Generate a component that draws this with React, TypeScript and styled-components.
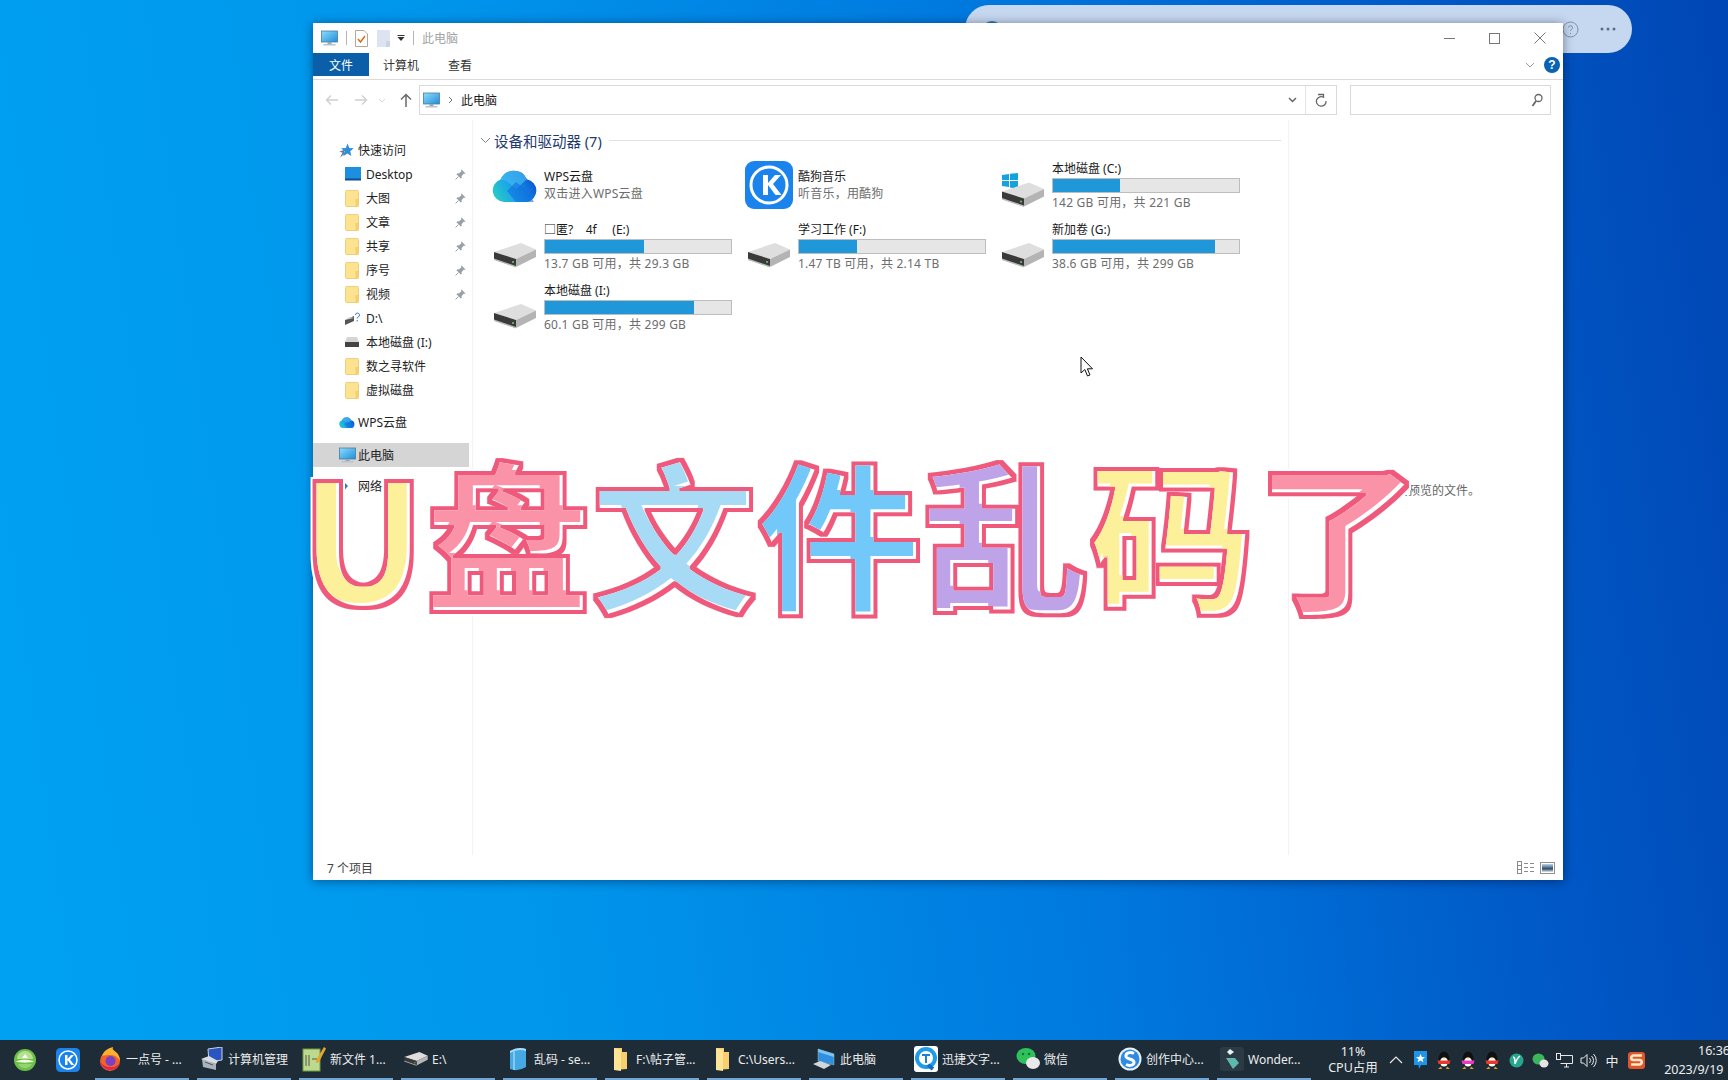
import React from "react";
import styled, { createGlobalStyle } from "styled-components";

const Global = createGlobalStyle`
  html, body { margin: 0; padding: 0; width: 1728px; height: 1080px; overflow: hidden; }
  body { font-family: "Noto Sans", "Noto Sans CJK SC", sans-serif; font-size: 12px; }
  * { box-sizing: border-box; }
`;

const Screen = styled.div`
  width: 1728px; height: 1080px; display: flex; flex-direction: column; overflow: hidden;
`;
const Desktop = styled.div`
  position: relative; flex: 1;
  background: linear-gradient(82deg, #00a1f3 0%, #0096ec 30%, #0078de 60%, #0058c6 84%, #0046b4 100%);
`;
const BackPill = styled.div`
  position: absolute; left: 965px; top: 5px; width: 667px; height: 48px; border-radius: 24px;
  background: #c6d8f0; display: flex; align-items: center; justify-content: flex-end; gap: 21px; padding-right: 16px;
`;
const PillBadge = styled.i`
  position: absolute; left: 17px; top: 16px; width: 20px; height: 20px; border-radius: 50%; background: #2c78c0;
`;
const Win = styled.div`
  position: absolute; left: 313px; top: 23px; width: 1250px; height: 857px; background: #fff;
  display: flex; flex-direction: column; box-shadow: 0 1px 10px rgba(0, 0, 30, .45);
`;
const TitleBar = styled.div`
  height: 30px; display: flex; align-items: center; padding-left: 8px; color: #a3a3a3; flex: none;
`;
const TitleSep = styled.i`
  width: 1px; height: 14px; background: #b5b5b5; margin: 0 8px;
`;
const QuickIcon = styled.span`
  display: flex; margin-right: ${p => p.$mr || 0}px;
`;
const WinControls = styled.div`
  margin-left: auto; display: flex; align-items: center; gap: 34px; padding-right: 17px;
`;
const TabRow = styled.div`
  height: 27px; flex: none; display: flex; align-items: flex-start; border-bottom: 1px solid #dadada; position: relative;
`;
const FileTab = styled.div`
  width: 56px; height: 23px; background: #0b5fa9; color: #fff; display: flex; align-items: center; justify-content: center;
`;
const Tab = styled.div`
  height: 23px; display: flex; align-items: center; color: #333; margin-left: ${p => p.$ml}px;
`;
const RibbonRight = styled.div`
  margin-left: auto; display: flex; align-items: center; height: 23px; gap: 9px; padding-right: 3px;
`;
const HelpDot = styled.div`
  width: 16px; height: 16px; border-radius: 50%; background: #0b62b0; color: #fff; font: bold 12px "Liberation Sans", sans-serif;
  display: flex; align-items: center; justify-content: center;
`;
const Toolbar = styled.div`
  height: 40px; flex: none; display: flex; align-items: center; padding: 0 12px 0 12px;
`;
const NavArrows = styled.div`
  width: 94px; display: flex; align-items: center; flex: none;
`;
const AddressBox = styled.div`
  flex: 1; height: 30px; border: 1px solid #d9d9d9; display: flex; align-items: center; padding-left: 3px; color: #1a1a1a;
`;
const Crumb = styled.span`
  margin-left: ${p => p.$ml}px; display: flex;
`;
const AddrEnd = styled.div`
  margin-left: auto; display: flex; align-items: center; height: 100%;
`;
const RefreshBox = styled.div`
  width: 31px; height: 100%; border-left: 1px solid #e3e3e3; display: flex; align-items: center; justify-content: center; margin-left: 8px;
`;
const SearchBox = styled.div`
  width: 201px; height: 30px; margin-left: 13px; border: 1px solid #d9d9d9; display: flex; align-items: center; justify-content: flex-end; padding-right: 7px; flex: none;
`;
const Body = styled.div`
  flex: 1; display: flex; min-height: 0;
`;
const Nav = styled.div`
  width: 160px; flex: none; padding-top: 18px; border-right: 1px solid #f3f3f3;
`;
const NavRow = styled.div`
  width: 156px; height: 24px; display: flex; align-items: center; color: #222;
  padding-left: ${p => (p.$sub ? 32 : 26)}px; padding-right: 3px;
  margin-top: ${p => p.$mt || 0}px;
  background: ${p => (p.$on ? "#d5d5d5" : "transparent")};
`;
const NavIcon = styled.span`
  width: ${p => (p.$sub ? 21 : 19)}px; flex: none; display: flex; align-items: center;
`;
const PinWrap = styled.span`
  margin-left: auto; display: flex;
`;
const Content = styled.div`
  flex: 1; padding-top: 10px; min-width: 0;
`;
const GroupHead = styled.div`
  height: 20px; display: flex; align-items: center; padding: 0 7px; font-size: 14.5px; color: #1e3a6e;
`;
const GroupChevron = styled.svg`
  margin-right: 3px;
`;
const GroupLine = styled.i`
  flex: 1; height: 1px; background: #e3e3e3; margin-left: 7px;
`;
const TileGrid = styled.div`
  display: grid; grid-template-columns: repeat(3, 254px); grid-auto-rows: 61px; margin-top: 4px; padding-left: 17px;
`;
const Tile = styled.div`
  display: flex; align-items: center;
`;
const TileIcon = styled.div`
  width: 54px; padding-right: 4px; padding-top: ${p => p.$pt || 0}px; flex: none; display: flex; justify-content: center;
`;
const TileText = styled.div`
  width: 188px; display: flex; flex-direction: column;
`;
const TileName = styled.div`
  height: 17px; line-height: ${p => (p.$drive ? 19 : 17)}px; color: #1a1a1a; white-space: pre;
`;
const TileSub = styled.div`
  height: 17px; line-height: 17px; color: #6d6d6d; white-space: pre; letter-spacing: .22px;
`;
const Bar = styled.div`
  height: 15px; margin: 2px 0 1px; border: 1px solid #bdbdbd; background: #e6e6e6;
`;
const BarFill = styled.div`
  height: 100%; background: #1f97d8;
`;
const Details = styled.div`
  width: 275px; flex: none; border-left: 1px solid #f3f3f3; display: flex; justify-content: center; padding-top: 361px; color: #666;
`;
const Status = styled.div`
  height: 25px; flex: none; display: flex; align-items: center; padding: 0 8px 0 14px; color: #444;
`;
const StatusIcons = styled.div`
  margin-left: auto; display: flex; align-items: center; gap: 6px;
`;
const Overlay = styled.div`
  position: absolute; left: 301px; top: 446px; display: flex; height: 170px;
`;
const Glyph = styled.span`
  width: ${p => p.$w}px; height: 170px; display: flex; justify-content: center;
  font: 700 ${p => p.$fs || 162}px/170px "Noto Sans CJK SC", sans-serif;
  color: ${p => p.$c}; filter: url(#sticker); transform: translateY(${p => p.$dy || 0}px) scaleX(${p => p.$sx || 1});
`;
const Cursor = styled.svg`
  position: absolute; left: 1080px; top: 356px;
`;
const Taskbar = styled.div`
  height: 40px; flex: none; background: #1e2c38; display: flex; align-items: center; padding-left: 13px; color: #ececec; position: relative;
`;
const TaskLead = styled.span`
  display: flex; margin-right: ${p => p.$mr}px;
`;
const TaskItems = styled.div`
  display: flex; gap: 8px; height: 100%;
`;
const TaskItem = styled.div`
  width: 94px; height: 100%; display: flex; align-items: center; gap: 4px; padding-left: 3px;
  border-bottom: 2px solid #6fa6d4; white-space: nowrap; overflow: hidden;
`;
const TaskIcon = styled.span`
  width: 24px; flex: none; display: flex; justify-content: center; align-items: center;
`;
const Cpu = styled.div`
  width: 62px; margin-left: 11px; flex: none; text-align: center; line-height: 16px; font-size: 12.5px;
`;
const Tray = styled.div`
  display: flex; align-items: center;
`;
const TrayCell = styled.span`
  width: 24px; display: flex; justify-content: center; align-items: center; font-size: 13px;
`;
const Clock = styled.div`
  margin-left: auto; margin-right: -2px; text-align: right; line-height: 19px; white-space: pre; font-size: 12.5px;
`;

const Monitor = ({ s = 17 }: { s?: number }) => (
  <svg width={s} height={s} viewBox="0 0 17 17">
    <defs><linearGradient id="scr" x1="0" y1="0" x2="1" y2="1"><stop offset="0" stopColor="#8fdcfb" /><stop offset="1" stopColor="#1d8fdc" /></linearGradient></defs>
    <rect x=".5" y="1" width="16" height="11" fill="url(#scr)" stroke="#4b7c9e" strokeWidth=".8" />
    <rect x="6.5" y="12" width="4" height="2" fill="#9aa8b2" />
    <rect x="2.5" y="14" width="12" height="1.5" fill="#b9c3cb" />
  </svg>
);
const Folder = () => (
  <svg width="15" height="17" viewBox="0 0 15 17">
    <rect x=".5" y=".5" width="13" height="16" rx="1" fill="#fde38f" stroke="#ecd07d" />
    <rect x="10.5" y="9" width="3" height="7.5" fill="#f6cf6c" />
  </svg>
);
const Pin = () => (
  <svg width="11" height="11" viewBox="0 0 11 11"><path d="M6.6 .6 10.4 4.4 9.5 5 8.7 4.7 6.7 6.9 6.6 9 5.7 9.6 1.5 5.3 2.1 4.4 4.2 4.3 6.3 2.3 6 1.4Z" fill="#98a0a8" /><path d="M3.4 7.6 .6 10.4" stroke="#98a0a8" /></svg>
);
const Star = () => (
  <svg width="15" height="15" viewBox="0 0 15 15"><path d="M8.6 .5 10.3 5 14.8 5.2 11.2 8.2 12.4 13 8.4 10.4 4.4 13 5.6 8.2 2 5.2 6.8 5Z" fill="#2e8fd8" /><path d="M5 7 .4 8.4 3.6 9.8 1 14.5 5.5 11Z" fill="#5c7f9c" /></svg>
);
const SmallCloud = ({ w = 16 }: { w?: number }) => (
  <svg width={w} height={w * 0.78} viewBox="0 0 46 36">
    <defs><linearGradient id="cl" x1="0" y1=".9" x2="1" y2=".5"><stop offset="0" stopColor="#2cd0c0" /><stop offset=".45" stopColor="#1ba6e8" /><stop offset="1" stopColor="#0a58d4" /></linearGradient></defs>
    <path d="M12 35A11.5 11.5 0 0 1 8.5 12.6 14.5 14.5 0 0 1 35 12.2 11.6 11.6 0 0 1 35 35Z" fill="url(#cl)" />
    <path d="M8.500 12.600A14.500 14.500 0 0 1 35 12.200L24 22 14 14Z" fill="#45b8f2" opacity=".7" />
    <path d="M24 35 15 24 24 15 36 24 42 35Z" fill="#0f6fe0" opacity=".6" />
  </svg>
);
const Kugou = ({ s = 48 }: { s?: number }) => (
  <svg width={s} height={s} viewBox="0 0 48 48">
    <rect width="48" height="48" rx="9" fill="#1b84ec" />
    <circle cx="24" cy="24" r="18" fill="none" stroke="#fff" strokeWidth="3" />
    <path d="M18 14h5v8l7-8h6l-8 9 8.500 11h-6l-7.500-10v10h-5Z" fill="#fff" />
  </svg>
);
const DriveShape = () => (
  <>
    <path d="M0 9 27 0 42 6.500 22 16Z" fill="#dedede" />
    <path d="M22 16 42 6.500V14L22 24Z" fill="#b4b4b4" />
    <path d="M0 9 22 16V24L0 16.500Z" fill="#3a3a3a" />
    <path d="M0 15.500 22 23V24.500L0 17Z" fill="#bcbcbc" />
    <circle cx="19" cy="19" r="1" fill="#6dd06d" />
  </>
);
const Drive = () => <svg width="42" height="25" viewBox="0 0 42 25"><DriveShape /></svg>;
const WinDrive = () => (
  <svg width="42" height="34" viewBox="0 0 42 34">
    <g fill="#14a3dc"><path d="M0 2 7 1V7H0Z" /><path d="M8 .8 16 0V7H8Z" /><path d="M0 8H7V14L0 13Z" /><path d="M8 8H16V16L8 14.500Z" /></g>
    <g transform="translate(0 9.500)"><DriveShape /></g>
  </svg>
);
const Tiny = {
  ball: <svg width="24" height="24" viewBox="0 0 24 24"><circle cx="12" cy="12" r="11" fill="#6cbf4a" /><path d="M4 11a8 8 0 0 1 16 0Z" fill="#b6e08e" /><path d="M3 13.500C8 11 16 11 21 13.500 17 15 7 15 3 13.500Z" fill="#f0fae2" /><path d="M12 6l3 4H9Z" fill="#fff" /><path d="M5 16a8 8 0 0 0 14 0Z" fill="#94d46e" /></svg>,
  fox: <svg width="24" height="24" viewBox="0 0 24 24"><circle cx="12" cy="14" r="10" fill="#f0632b" /><path d="M4 9C6 3 11 1 15 0c-1 3 1 3 4 6 2 2 3 5 3 8-2-4-5-6-9-6-4 0-7 0-9 1Z" fill="#ffb02e" /><circle cx="12.500" cy="14" r="5" fill="#7a3fc2" /><path d="M2 14c1 5 5 9 10 9 5 0 9-3 10-8-2 4-6 6-10 5-4 0-8-2-10-6Z" fill="#e3264f" /></svg>,
  mgmt: <svg width="24" height="24" viewBox="0 0 24 24"><path d="M8 2 22 0V13L9 15Z" fill="#2a55c0" stroke="#c9d3e2" /><path d="M2 12 16 17V23L3 20Z" fill="#a9b3bd" /><path d="M1 12 9 9 18 14 16 17Z" fill="#d8dee4" /><path d="M5 15l8 3" stroke="#555" /></svg>,
  npp: <svg width="24" height="26" viewBox="0 0 24 26"><rect x="1" y="3" width="17" height="22" fill="#bcd98e" stroke="#6f9a3c" /><path d="M4 9v11M7 9v11" stroke="#555" /><path d="M10 13h5" stroke="#555" /><path d="M14 14 22 1l2 1.500L17 16l-3 1Z" fill="#e2a82c" /></svg>,
  drv: <svg width="24" height="14" viewBox="0 0 42 25"><DriveShape /></svg>,
  box: <svg width="18" height="24" viewBox="0 0 18 24"><path d="M1 4Q9-1 17 2V20Q9 25 1 22Z" fill="#45a9e4" /><path d="M1 4Q9-1 17 2V4Q9 1 1 6Z" fill="#a9dcf5" /><path d="M5 4V23" stroke="#87c9ee" strokeWidth="2" /></svg>,
  folder: <svg width="16" height="24" viewBox="0 0 16 24"><path d="M2 1H10V5H15V22L2 23Z" fill="#f8cf6c" /><path d="M2 1 9 3V24L2 23Z" fill="#fde497" /></svg>,
  laptop: <svg width="24" height="24" viewBox="0 0 24 24"><path d="M6 2 22 7V18L6 14Z" fill="#2f8fe0" stroke="#9bb" strokeWidth=".5" /><path d="M1 17 8 14 19 18 12 22Z" fill="#cfd6dc" /><path d="M6 2 22 7 22 10 6 5Z" fill="#7bc4f4" /></svg>,
  xun: <svg width="24" height="26" viewBox="0 0 24 26"><rect width="24" height="26" rx="3" fill="#fff" /><circle cx="12" cy="12" r="9" fill="none" stroke="#1f9be8" strokeWidth="4" /><path d="M14 19l5 4" stroke="#0f6fc8" strokeWidth="4" /><path d="M8 9h8M12 9v8" stroke="#1f7fd8" strokeWidth="2" /></svg>,
  chat: <svg width="24" height="24" viewBox="0 0 24 24"><ellipse cx="10" cy="9" rx="9.500" ry="8" fill="#2fc25b" /><ellipse cx="17" cy="16" rx="7" ry="6" fill="#e9e9e9" /><circle cx="7" cy="7" r="1.300" fill="#174" /><circle cx="13" cy="7" r="1.300" fill="#174" /></svg>,
  sogou: <svg width="24" height="24" viewBox="0 0 24 24"><circle cx="12" cy="12" r="11.500" fill="#e8f2fc" /><circle cx="12" cy="12" r="9.500" fill="#2f8be0" /><path d="M16 6.500C12 4.500 7.500 6 8 9.500c.5 3 7.500 2 8 5.500.3 3-4 4.500-8 2.500" fill="none" stroke="#fff" strokeWidth="3" /></svg>,
  wonder: <svg width="24" height="24" viewBox="0 0 24 24"><rect width="24" height="24" rx="3" fill="#2b3a44" /><path d="M10 2l4 3-4 3-3-3Z" fill="#e8f4f4" /><path d="M6 11h9l4 5-6 6Z" fill="#5fb8ad" /></svg>,
};
const TrayIcons = [
  <svg key="a" width="15" height="18" viewBox="0 0 15 18"><path d="M1 0H14V14L8 14 6 18 5.500 14H1Z" fill="#1f95ea" /><path d="M7.500 3l1.300 3 3.200.2-2.500 2 .9 3.100-2.900-1.700-2.900 1.700.9-3.100-2.500-2 3.200-.2Z" fill="#fff" /></svg>,
  ...["#e8392e", "#e83cc0", "#e8392e"].map((c, i) => (
    <svg key={i} width="16" height="19" viewBox="0 0 16 19"><ellipse cx="8" cy="8" rx="5.500" ry="7.500" fill="#101010" /><ellipse cx="8" cy="11" rx="4" ry="4.500" fill="#fff" /><path d="M1.500 9.500h13l-1 3.500H2.500Z" fill={c} /><path d="M2 18h4l-1-2.500ZM14 18h-4l1-2.500Z" fill="#e0a020" /><path d="M6.500 6.500h3L8 8Z" fill="#f2b134" /></svg>
  )),
  <svg key="b" width="15" height="15" viewBox="0 0 15 15"><circle cx="7.500" cy="7.500" r="7" fill="#27a58e" /><path d="M4 4c2 0 2 3 2 7M11 3C8 5 7 8 6 11" stroke="#fff" strokeWidth="1.500" fill="none" /></svg>,
  <svg key="c" width="17" height="15" viewBox="0 0 17 15"><ellipse cx="6.500" cy="6" rx="6" ry="5.500" fill="#3cb65a" /><ellipse cx="12" cy="10.500" rx="4.500" ry="4" fill="#e5e5e5" /></svg>,
  <svg key="d" width="17" height="15" viewBox="0 0 17 15" fill="none" stroke="#e8e8e8"><path d="M4.500 2.500H16.500V10.500H4.500" /><rect x=".5" y=".5" width="4" height="6" /><path d="M8 14H13M10.500 10.500V14" /></svg>,
  <svg key="e" width="17" height="15" viewBox="0 0 17 15" fill="none" stroke="#e8e8e8"><path d="M1 5H3.500L7 1.500V13.500L3.500 10H1Z" /><path d="M9.500 5a3.500 3.500 0 0 1 0 5M11.500 3a6 6 0 0 1 0 9M13.500 1a9 9 0 0 1 0 13" /></svg>,
];
const Sogou2 = () => (
  <svg width="17" height="17" viewBox="0 0 17 17"><rect width="17" height="17" rx="3" fill="#e2552a" /><path d="M14 3.500H5.500a2 2 0 0 0 0 4.500h6a2 2 0 0 1 0 4.500H3" fill="none" stroke="#fde9c8" strokeWidth="2.600" /></svg>
);

const navSub = [
  ["Desktop", "desk", true], ["大图", "f", true], ["文章", "f", true], ["共享", "f", true], ["序号", "f", true], ["视频", "f", true],
  ["D:\\", "d", false], ["本地磁盘 (I:)", "i", false], ["数之寻软件", "f", false], ["虚拟磁盘", "f", false],
] as const;
const drives = [
  { name: "本地磁盘 (C:)", used: 36, sub: "142 GB 可用，共 221 GB", win: true },
  { name: "□匿?    4f     (E:)", used: 53, sub: "13.7 GB 可用，共 29.3 GB" },
  { name: "学习工作 (F:)", used: 31, sub: "1.47 TB 可用，共 2.14 TB" },
  { name: "新加卷 (G:)", used: 87, sub: "38.6 GB 可用，共 299 GB" },
  { name: "本地磁盘 (I:)", used: 80, sub: "60.1 GB 可用，共 299 GB" },
];
const navIcon = (k: string) => {
  if (k === "f") return <Folder />;
  if (k === "desk") return <svg width="16" height="14" viewBox="0 0 16 14"><rect width="16" height="13" fill="#1c8fe0" /><rect y="11.500" width="16" height="2" fill="#0e4f8a" /></svg>;
  if (k === "d") return <svg width="15" height="14" viewBox="0 0 15 14"><path d="M0 9 9 5V10L0 14Z" fill="#555" /><path d="M0 9 5 6 9 7" fill="#ccc" /><path d="M10.500 4a2 2 0 1 1 2.500 2c-.6.4-.8.8-.8 1.500M12.200 9v1.500" fill="none" stroke="#3a7bc0" /></svg>;
  return <svg width="14" height="10" viewBox="0 0 14 10"><path d="M2 0H12L14 5V10H0V5Z" fill="#d5d5d5" /><rect y="5" width="14" height="5" fill="#444" /></svg>;
};
const tasks: [React.ReactNode, string][] = [
  [Tiny.fox, "一点号 - ..."], [Tiny.mgmt, "计算机管理"], [Tiny.npp, "新文件 1..."], [Tiny.drv, "E:\\"], [Tiny.box, "乱码 - se..."],
  [Tiny.folder, "F:\\帖子管..."], [Tiny.folder, "C:\\Users..."], [Tiny.laptop, "此电脑"], [Tiny.xun, "迅捷文字..."], [Tiny.chat, "微信"], [Tiny.sogou, "创作中心..."], [Tiny.wonder, "Wonder..."],
];
const glyphs = [
  { t: "U", c: "#fdf09a", w: 124, fs: 166, sx: 1, dy: 2 },
  { t: "盘", c: "#fb93a8", w: 166, sx: 1.02 }, { t: "文", c: "#a7dbf5", w: 166, sx: 1.02 }, { t: "件", c: "#72c8f8", w: 166, sx: 1.02 },
  { t: "乱", c: "#bfa3e8", w: 166, sx: 1.02 }, { t: "码", c: "#fdf09a", w: 166, sx: 1.02 }, { t: "了", c: "#fb93a8", w: 166, sx: 1.02 },
];

export default function App() {
  return (
    <Screen>
      <Global />
      <Desktop>
        <BackPill>
          <PillBadge />
          <svg width="17" height="17" viewBox="0 0 17 17" fill="none" stroke="#7f8ea3"><circle cx="8.500" cy="8.500" r="7.500" /><path d="M6.500 6.500a2 2 0 1 1 2.800 2c-.6.4-.8.8-.8 1.500M8.500 12v1" /></svg>
          <svg width="16" height="4" viewBox="0 0 16 4" fill="#5d6b80"><circle cx="2" cy="2" r="1.500" /><circle cx="8" cy="2" r="1.500" /><circle cx="14" cy="2" r="1.500" /></svg>
        </BackPill>
        <Win>
          <TitleBar>
            <QuickIcon><Monitor /></QuickIcon>
            <TitleSep />
            <QuickIcon $mr={9}><svg width="13" height="17" viewBox="0 0 13 17"><path d="M.5 .5H9L12.500 4V16.500H.5Z" fill="#fff" stroke="#b5a79a" /><path d="M3 9l2.500 3L10 6" fill="none" stroke="#d2691e" strokeWidth="1.400" /></svg></QuickIcon>
            <QuickIcon $mr={7}><svg width="13" height="17" viewBox="0 0 13 17"><rect width="13" height="17" fill="#dbe4f0" /><rect x="9" y="11" width="4" height="6" fill="#c9d4e4" /></svg></QuickIcon>
            <QuickIcon><svg width="8" height="6" viewBox="0 0 8 6"><path d="M.5 .5H7.500" stroke="#333" /><path d="M.5 2H7.500L4 6Z" fill="#333" /></svg></QuickIcon>
            <TitleSep />
            此电脑
            <WinControls>
              <svg width="11" height="11" viewBox="0 0 11 11"><path d="M0 5.500H11" stroke="#777" /></svg>
              <svg width="11" height="11" viewBox="0 0 11 11"><rect x=".5" y=".5" width="10" height="10" fill="none" stroke="#777" /></svg>
              <svg width="12" height="12" viewBox="0 0 12 12"><path d="M.5 .5 11.500 11.500M11.500 .5 .5 11.500" stroke="#777" /></svg>
            </WinControls>
          </TitleBar>
          <TabRow>
            <FileTab>文件</FileTab>
            <Tab $ml={14}>计算机</Tab>
            <Tab $ml={29}>查看</Tab>
            <RibbonRight>
              <svg width="10" height="6" viewBox="0 0 10 6"><path d="M1 1 5 5 9 1" fill="none" stroke="#9a9a9a" /></svg>
              <HelpDot>?</HelpDot>
            </RibbonRight>
          </TabRow>
          <Toolbar>
            <NavArrows>
              <svg width="14" height="12" viewBox="0 0 14 12"><path d="M13 6H2M6 1.500 1.500 6 6 10.500" fill="none" stroke="#d0d0d0" strokeWidth="1.400" /></svg>
              <Crumb $ml={15}><svg width="14" height="12" viewBox="0 0 14 12"><path d="M1 6H12M8 1.500 12.500 6 8 10.500" fill="none" stroke="#d0d0d0" strokeWidth="1.400" /></svg></Crumb>
              <Crumb $ml={10}><svg width="8" height="5" viewBox="0 0 8 5"><path d="M1 1 4 4 7 1" fill="none" stroke="#d8d8d8" /></svg></Crumb>
              <Crumb $ml={14}><svg width="12" height="14" viewBox="0 0 12 14"><path d="M6 14V2M1 6.500 6 1.500 11 6.500" fill="none" stroke="#6a6a6a" strokeWidth="1.500" /></svg></Crumb>
            </NavArrows>
            <AddressBox>
              <Monitor />
              <Crumb $ml={8}><svg width="5" height="8" viewBox="0 0 5 8"><path d="M1 1 4 4 1 7" fill="none" stroke="#777" /></svg></Crumb>
              <Crumb $ml={8}>此电脑</Crumb>
              <AddrEnd>
                <svg width="9" height="6" viewBox="0 0 9 6"><path d="M1 1 4.500 4.500 8 1" fill="none" stroke="#666" strokeWidth="1.500" /></svg>
                <RefreshBox>
                  <svg width="12" height="14" viewBox="0 0 12 14"><path d="M9 4.500A4.800 4.800 0 1 0 11 8M3 1.500H8.500V5" fill="none" stroke="#666" strokeWidth="1.300" /></svg>
                </RefreshBox>
              </AddrEnd>
            </AddressBox>
            <SearchBox>
              <svg width="12" height="14" viewBox="0 0 12 14"><circle cx="7.500" cy="5" r="3.500" fill="none" stroke="#666" strokeWidth="1.300" /><path d="M5 8 1.500 13" stroke="#666" strokeWidth="1.800" /></svg>
            </SearchBox>
          </Toolbar>
          <Body>
            <Nav>
              <NavRow><NavIcon><Star /></NavIcon>快速访问</NavRow>
              {navSub.map(([label, kind, pin]) => (
                <NavRow $sub key={label}>
                  <NavIcon $sub>{navIcon(kind)}</NavIcon>{label}
                  {pin && <PinWrap><Pin /></PinWrap>}
                </NavRow>
              ))}
              <NavRow $mt={8}><NavIcon><SmallCloud /></NavIcon>WPS云盘</NavRow>
              <NavRow $mt={9} $on><NavIcon><Monitor /></NavIcon>此电脑</NavRow>
              <NavRow $mt={7}><NavIcon><svg width="10" height="15" viewBox="0 0 10 15"><path d="M2 0 9 7 2 15Z" fill="#2a7fc0" /><path d="M0 4 4 7 2 11Z" fill="#85bde0" /></svg></NavIcon>网络</NavRow>
            </Nav>
            <Content>
              <GroupHead>
                <GroupChevron width="11" height="7" viewBox="0 0 11 7"><path d="M1 1 5.500 5.500 10 1" fill="none" stroke="#7a8794" /></GroupChevron>
                设备和驱动器 (7)
                <GroupLine />
              </GroupHead>
              <TileGrid>
                <Tile>
                  <TileIcon><SmallCloud w={46} /></TileIcon>
                  <TileText><TileName>WPS云盘</TileName><TileSub>双击进入WPS云盘</TileSub></TileText>
                </Tile>
                <Tile>
                  <TileIcon><Kugou /></TileIcon>
                  <TileText><TileName>酷狗音乐</TileName><TileSub>听音乐，用酷狗</TileSub></TileText>
                </Tile>
                {drives.map(d => (
                  <Tile key={d.name}>
                    <TileIcon $pt={d.win ? 10 : 20}>{d.win ? <WinDrive /> : <Drive />}</TileIcon>
                    <TileText>
                      <TileName $drive>{d.name}</TileName>
                      <Bar><BarFill style={{ width: `${d.used}%` }} /></Bar>
                      <TileSub>{d.sub}</TileSub>
                    </TileText>
                  </Tile>
                ))}
              </TileGrid>
            </Content>
            <Details>选择要预览的文件。</Details>
          </Body>
          <Status>
            7 个项目
            <StatusIcons>
              <svg width="17" height="13" viewBox="0 0 17 13" fill="none" stroke="#8a8a8a"><rect x=".5" y=".5" width="4" height="12" /><path d="M.5 4.500h4M.5 8.500h4M7 2.500h4M13 2.500h4M7 6.500h4M13 6.500h4M7 10.500h4M13 10.500h4" /></svg>
              <svg width="15" height="12" viewBox="0 0 15 12"><defs><linearGradient id="pic" x1="0" y1="0" x2="0" y2="1"><stop offset="0" stopColor="#b9d8ef" /><stop offset=".6" stopColor="#2d4a66" /><stop offset="1" stopColor="#dfe8ef" /></linearGradient></defs><rect x=".5" y=".5" width="14" height="11" fill="#fff" stroke="#8f8f8f" /><rect x="2" y="2" width="11" height="8" fill="url(#pic)" /></svg>
            </StatusIcons>
          </Status>
        </Win>
        <svg width="0" height="0" style={{ position: "absolute" }}>
          <filter id="sticker" x="-15%" y="-15%" width="130%" height="130%" colorInterpolationFilters="sRGB">
            <feMorphology in="SourceAlpha" operator="erode" radius="1" result="thin" />
            <feMorphology in="SourceAlpha" operator="dilate" radius="5" result="ha" />
            <feFlood floodColor="#ffffff" />
            <feComposite in2="ha" operator="in" result="halo" />
            <feMorphology in="SourceAlpha" operator="dilate" radius="2.500" result="oa" />
            <feFlood floodColor="#ef5a7c" />
            <feComposite in2="oa" operator="in" result="outline" />
            <feFlood floodColor="#ffffff" />
            <feComposite in2="thin" operator="in" result="base" />
            <feOffset in="SourceGraphic" dx="-4" dy="-4" result="shift" />
            <feComposite in="shift" in2="thin" operator="in" result="top" />
            <feMerge>
              <feMergeNode in="halo" /><feMergeNode in="outline" /><feMergeNode in="base" /><feMergeNode in="top" />
            </feMerge>
          </filter>
        </svg>
        <Overlay>
          {glyphs.map(g => <Glyph key={g.t} $c={g.c} $w={g.w} $sx={g.sx} $fs={g.fs} $dy={g.dy}>{g.t}</Glyph>)}
        </Overlay>
        <Cursor width="13" height="22" viewBox="0 0 13 22"><path d="M1 1V17L4.800 13.500 7.500 20 10 19 7.400 12.800H12.500Z" fill="#fff" stroke="#111" /></Cursor>
      </Desktop>
      <Taskbar>
        <TaskLead $mr={19}>{Tiny.ball}</TaskLead>
        <TaskLead $mr={15}><Kugou s={24} /></TaskLead>
        <TaskItems>
          {tasks.map(([ic, label]) => <TaskItem key={label}><TaskIcon>{ic}</TaskIcon><span>{label}</span></TaskItem>)}
        </TaskItems>
        <Cpu>11%<br />CPU占用</Cpu>
        <Tray>
          <TrayCell><svg width="14" height="8" viewBox="0 0 14 8"><path d="M1 7 7 1 13 7" fill="none" stroke="#e8e8e8" strokeWidth="1.200" /></svg></TrayCell>
          {TrayIcons.map((ic, i) => <TrayCell key={i}>{ic}</TrayCell>)}
          <TrayCell>中</TrayCell>
          <TrayCell><Sogou2 /></TrayCell>
        </Tray>
        <Clock>16:36{"\n"}2023/9/19  </Clock>
      </Taskbar>
    </Screen>
  );
}
